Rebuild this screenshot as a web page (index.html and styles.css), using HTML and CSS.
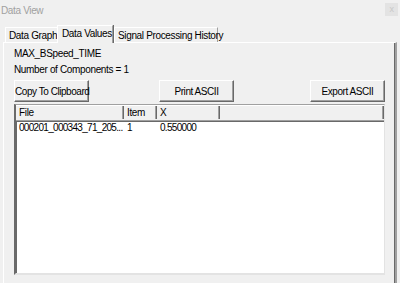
FILE: index.html
```html
<!DOCTYPE html>
<html>
<head>
<meta charset="utf-8">
<link rel="stylesheet" href="styles.css">
</head>
<body>
<div class="window">
  <div class="titlebar">
    <span class="title">Data View</span>
    <span class="close">x</span>
  </div>
  <div class="tabs">
    <div class="tab t1">Data Graph</div>
    <div class="tab t2 selected">Data Values</div>
    <div class="tab t3">Signal Processing History</div>
  </div>
  <div class="panel">
    <div class="label l1">MAX_BSpeed_TIME</div>
    <div class="label l2">Number of Components = 1</div>
    <div class="buttons">
      <button class="btn b-copy">Copy To Clipboard</button>
      <button class="btn b-print">Print ASCII</button>
      <button class="btn b-export">Export ASCII</button>
    </div>
    <div class="list">
      <div class="header">
        <div class="col c-file">File</div>
        <div class="col c-item">Item</div>
        <div class="col c-x">X</div>
        <div class="col c-rest"></div>
      </div>
      <div class="row">
        <div class="cell c-file num">000201_000343_71_205...</div>
        <div class="cell c-item">1</div>
        <div class="cell c-x num">0.550000</div>
      </div>
    </div>
  </div>
</div>
</body>
</html>
```
FILE: styles.css
```css
html, body {
  margin: 0;
  padding: 0;
  background: #f0f0f0;
  width: 400px;
  height: 283px;
  overflow: hidden;
}
.window {
  font-family: "Liberation Sans", Arial, sans-serif;
  font-size: 10px;
  letter-spacing: -0.35px;
  color: #000;
  display: flex;
  flex-direction: column;
}
.titlebar {
  height: 25px;
  display: flex;
  justify-content: space-between;
  align-items: flex-start;
}
.title {
  color: #a0a0a0;
  margin-top: 5px;
  margin-left: 1px;
}
.close {
  width: 13px;
  height: 13px;
  margin-top: 3px;
  margin-right: 2px;
  background: #e3e3e3;
  color: #c8c8c8;
  font-size: 9px;
  line-height: 12px;
  text-align: center;
}
.tabs {
  display: flex;
  align-items: flex-end;
  margin-left: 5px;
  height: 17px;
  position: relative;
  z-index: 1;
}
.tab {
  height: 15px;
  line-height: 15px;
  box-sizing: border-box;
  padding-left: 3px;
  border-top: 1px solid #fff;
  border-left: 1px solid #fff;
  border-right: 1px solid #a0a0a0;
  white-space: nowrap;
}
.t1 { width: 52px; border-right: none; }
.t2 { width: 56px; padding-left: 4px; }
.t3 { width: 104px; }
.tab.selected {
  height: 18px;
  margin-bottom: -1px;
  line-height: 15px;
  background: #f0f0f0;
  box-shadow: 1px 0 0 #696969;
  margin-right: 1px;
}
.panel {
  margin: 0 3px;
  height: 242px;
  box-sizing: border-box;
  border-top: 1px solid #fff;
  border-left: 1px solid #fff;
  border-right: 2px solid #a0a0a0;
  box-shadow: inset -1px 0 0 #696969;
  padding: 3px 0 0 10px;
  display: flex;
  flex-direction: column;
}
.label {
  height: 16px;
  line-height: 16px;
}
.buttons {
  display: flex;
  margin-top: 2px;
}
.btn {
  font-family: "Liberation Sans", Arial, sans-serif;
  font-size: 10px;
  letter-spacing: -0.45px;
  white-space: nowrap;
  width: 75px;
  height: 22px;
  padding: 0;
  background: #f0f0f0;
  border: 1px solid;
  border-color: #fff #696969 #696969 #fff;
  box-shadow: inset -1px -1px 0 #a0a0a0;
  color: #000;
}
.b-print { margin-left: 70px; }
.b-export { margin-left: 76px; }
.list {
  margin-top: 2px;
  width: 371px;
  height: 171px;
  box-sizing: border-box;
  background: #fff;
  border-top: 1px solid #a0a0a0;
  border-left: 2px solid #6a6a6a;
  border-right: 1px solid #e3e3e3;
  border-bottom: 2px solid #e3e3e3;
  box-shadow: inset 1px 1px 0 #696969;
}
.header {
  display: flex;
  height: 14px;
  background: #f0f0f0;
  border-bottom: 1px solid #a0a0a0;
  border-top: 1px solid #fff;
  box-shadow: 0 1px 0 #696969;
}
.col {
  box-sizing: border-box;
  height: 13px;
  line-height: 13px;
  padding-left: 3px;
  border-right: 1px solid #a0a0a0;
  box-shadow: 1px 0 0 #696969;
  margin-right: 1px;
}
.c-file { width: 107px; }
.c-item { width: 32px; }
.c-x { width: 62px; }
.c-rest { flex: 1; }
.row {
  display: flex;
  margin-top: 0;
  height: 13px;
  line-height: 13px;
}
.cell {
  box-sizing: border-box;
  padding-left: 3px;
  margin-right: 1px;
  white-space: nowrap;
}
.num { letter-spacing: -0.7px; }
```
